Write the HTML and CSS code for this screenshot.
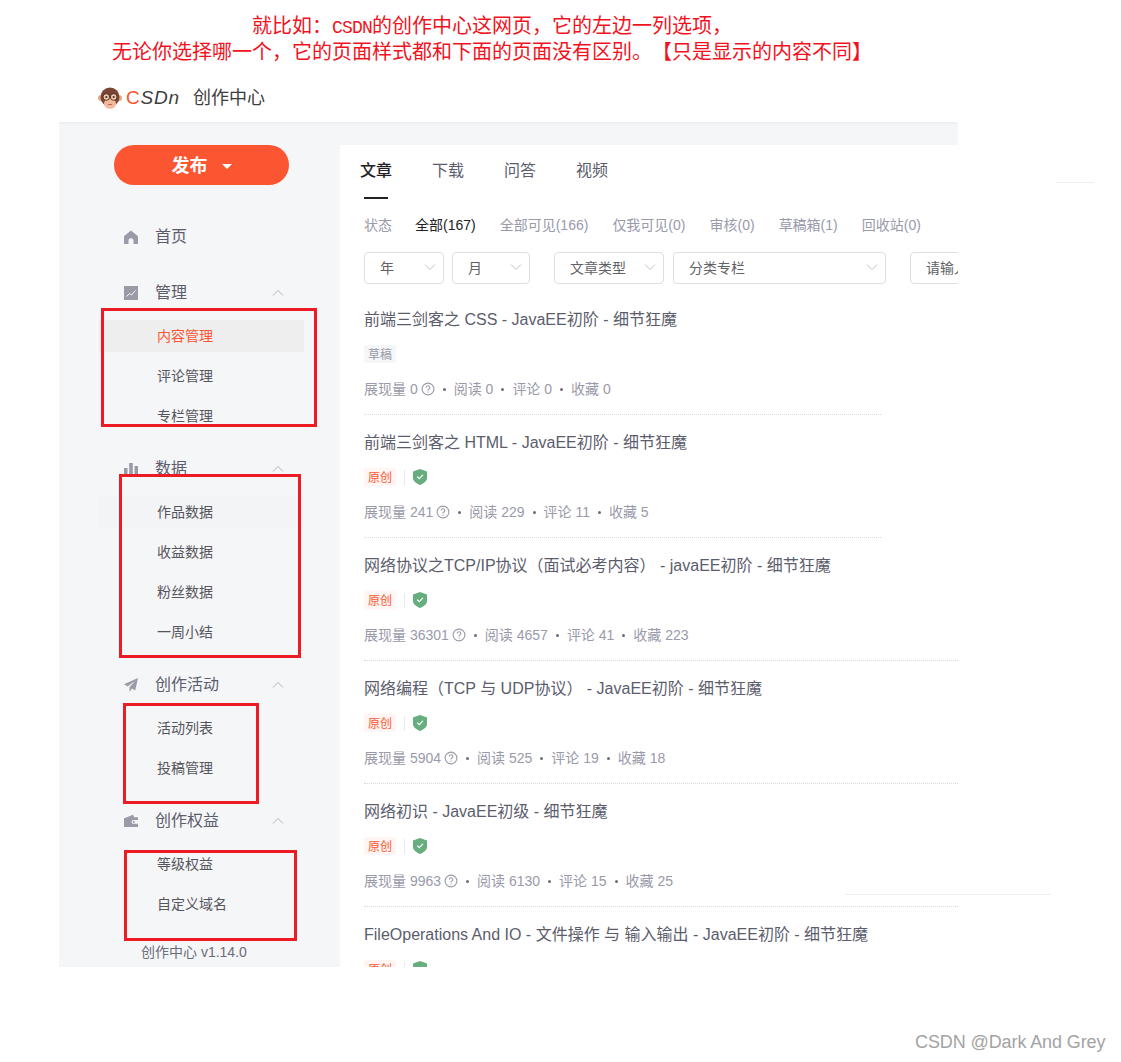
FILE: index.html
```html
<!DOCTYPE html>
<html lang="zh-CN">
<head>
<meta charset="utf-8">
<title>创作中心</title>
<link rel="stylesheet" href="styles.css">
</head>
<body>
<svg class="defs" width="0" height="0" aria-hidden="true">
  <symbol id="i-chev-up" viewBox="0 0 12 8"><path d="M1 6.5 6 1.5l5 5" fill="none" stroke="currentColor" stroke-width="1"/></symbol>
  <symbol id="i-chev-down" viewBox="0 0 12 8"><path d="M1 1.5 6 6.5l5-5" fill="none" stroke="currentColor" stroke-width="1"/></symbol>
  <symbol id="i-help" viewBox="0 0 14 14"><circle cx="7" cy="7" r="5.9" fill="none" stroke="currentColor" stroke-width="1.1"/><path d="M5.2 5.6A1.8 1.8 0 1 1 7.6 7.3c-.5.2-.6.5-.6 1.1" fill="none" stroke="currentColor" stroke-width="1.1"/><circle cx="7" cy="10.1" r=".7" fill="currentColor"/></symbol>
  <symbol id="i-shield" viewBox="0 0 14 16"><path d="M7 0 14 2.4V9c0 3.2-3.6 5.6-7 7-3.400-1.400-7-3.800-7-7V2.400Z" fill="#67ae7f"/><path d="M4.200 7.600 6.300 9.700 9.900 5.900" fill="none" stroke="#fff" stroke-width="1.200"/></symbol>
</svg>

<div class="annotation">
  <div>就比如：<span class="mono">CSDN</span>的创作中心这网页，它的左边一列选项，</div>
  <div>无论你选择哪一个，它的页面样式都和下面的页面没有区别。【只是显示的内容不同】</div>
</div>

<div class="shot">
  <header class="topbar">
    <svg class="monkey" viewBox="0 0 24 22" aria-hidden="true">
      <circle cx="3" cy="11" r="3" fill="#e8a782"/>
      <circle cx="21" cy="11" r="3" fill="#e8a782"/>
      <circle cx="12" cy="10" r="9.500" fill="#7a4534"/>
      <ellipse cx="12" cy="16.500" rx="6" ry="5.300" fill="#f2b99a"/>
      <circle cx="8.300" cy="10" r="3.300" fill="#f2c9ae" stroke="#4a2a20" stroke-width=".9"/>
      <circle cx="15.700" cy="10" r="3.300" fill="#f2c9ae" stroke="#4a2a20" stroke-width=".9"/>
      <circle cx="8.300" cy="10" r="1.100" fill="#4a2a20"/>
      <circle cx="15.700" cy="10" r="1.100" fill="#4a2a20"/>
      <path d="M10 17.500h4" stroke="#a8664c" stroke-width=".9"/>
    </svg>
    <span class="logo-text"><span class="logo-c">C</span>SDn</span>
    <span class="topbar-title">创作中心</span>
  </header>

  <div class="workspace">
    <aside class="sidebar">
      <button class="publish">发布<span class="caret"></span></button>
      <nav class="menu">
        <div class="head head-home">
          <svg class="head-icon" viewBox="0 0 14 14"><path d="M7 .5 14 6.300V14H9.500V10.800a2.500 2.500 0 0 0-5 0V14H0V6.300Z" fill="#9a9ba6"/></svg>
          <span>首页</span>
        </div>

        <section class="group">
          <div class="head">
            <svg class="head-icon" viewBox="0 0 14 14"><rect width="14" height="14" fill="#9a9ba6"/><path d="M2.500 10.500 5.500 7.500 7.500 9 11.500 4.500" fill="none" stroke="#f5f6f8" stroke-width="1"/></svg>
            <span>管理</span>
            <svg class="chev"><use href="#i-chev-up"/></svg>
          </div>
          <a class="sub sub-active">内容管理</a>
          <a class="sub">评论管理</a>
          <a class="sub">专栏管理</a>
        </section>

        <section class="group">
          <div class="head">
            <svg class="head-icon" viewBox="0 0 14 14"><path d="M0 6h3.500v8H0ZM5.200 1h3.600v13H5.200ZM10.500 4H14v10h-3.500Z" fill="#9a9ba6"/></svg>
            <span>数据</span>
            <svg class="chev"><use href="#i-chev-up"/></svg>
          </div>
          <a class="sub sub-hover">作品数据</a>
          <a class="sub">收益数据</a>
          <a class="sub">粉丝数据</a>
          <a class="sub">一周小结</a>
        </section>

        <section class="group">
          <div class="head">
            <svg class="head-icon" viewBox="0 0 14 14"><path d="M14 0 0 6.200l3.600 2.200L11 3 5.500 9.200V14L8 10.500l3.200 2Z" fill="#9a9ba6"/></svg>
            <span>创作活动</span>
            <svg class="chev"><use href="#i-chev-up"/></svg>
          </div>
          <a class="sub">活动列表</a>
          <a class="sub">投稿管理</a>
        </section>

        <section class="group">
          <div class="head">
            <svg class="head-icon" viewBox="0 0 14 14"><path d="M1 4 9 .8l1.200 2.500H14v2.700H9.500a1.900 1.900 0 0 0 0 3.800H14V13H0V4Z" fill="#9a9ba6"/><circle cx="9.800" cy="7.900" r="1" fill="#9a9ba6"/></svg>
            <span>创作权益</span>
            <svg class="chev"><use href="#i-chev-up"/></svg>
          </div>
          <a class="sub">等级权益</a>
          <a class="sub">自定义域名</a>
        </section>
      </nav>
      <div class="version">创作中心 v1.14.0</div>
    </aside>

    <main class="content">
      <div class="tabs">
        <span class="tab tab-active">文章</span>
        <span class="tab">下载</span>
        <span class="tab">问答</span>
        <span class="tab">视频</span>
      </div>

      <div class="status">
        <span class="status-label">状态</span>
        <span class="status-active">全部(167)</span>
        <span>全部可见(166)</span>
        <span>仅我可见(0)</span>
        <span>审核(0)</span>
        <span>草稿箱(1)</span>
        <span>回收站(0)</span>
      </div>

      <div class="filters">
        <div class="select s-year">年<svg class="select-chev"><use href="#i-chev-down"/></svg></div>
        <div class="select s-month">月<svg class="select-chev"><use href="#i-chev-down"/></svg></div>
        <div class="select s-type">文章类型<svg class="select-chev"><use href="#i-chev-down"/></svg></div>
        <div class="select s-cat">分类专栏<svg class="select-chev"><use href="#i-chev-down"/></svg></div>
        <div class="select s-search">请输入关键词</div>
      </div>

      <article class="post post-short">
        <h3 class="post-title">前端三剑客之 CSS - JavaEE初阶 - 细节狂魔</h3>
        <div class="post-tags"><span class="tag tag-draft">草稿</span></div>
        <div class="post-stats"><span>展现量 0</span><svg class="help"><use href="#i-help"/></svg><i class="dot"></i><span>阅读 0</span><i class="dot"></i><span>评论 0</span><i class="dot"></i><span>收藏 0</span></div>
      </article>

      <article class="post post-short">
        <h3 class="post-title">前端三剑客之 HTML - JavaEE初阶 - 细节狂魔</h3>
        <div class="post-tags"><span class="tag tag-orig">原创</span><i class="tag-sep"></i><svg class="shield"><use href="#i-shield"/></svg></div>
        <div class="post-stats"><span>展现量 241</span><svg class="help"><use href="#i-help"/></svg><i class="dot"></i><span>阅读 229</span><i class="dot"></i><span>评论 11</span><i class="dot"></i><span>收藏 5</span></div>
      </article>

      <article class="post">
        <h3 class="post-title">网络协议之TCP/IP协议（面试必考内容） - javaEE初阶 - 细节狂魔</h3>
        <div class="post-tags"><span class="tag tag-orig">原创</span><i class="tag-sep"></i><svg class="shield"><use href="#i-shield"/></svg></div>
        <div class="post-stats"><span>展现量 36301</span><svg class="help"><use href="#i-help"/></svg><i class="dot"></i><span>阅读 4657</span><i class="dot"></i><span>评论 41</span><i class="dot"></i><span>收藏 223</span></div>
      </article>

      <article class="post">
        <h3 class="post-title">网络编程（TCP 与 UDP协议） - JavaEE初阶 - 细节狂魔</h3>
        <div class="post-tags"><span class="tag tag-orig">原创</span><i class="tag-sep"></i><svg class="shield"><use href="#i-shield"/></svg></div>
        <div class="post-stats"><span>展现量 5904</span><svg class="help"><use href="#i-help"/></svg><i class="dot"></i><span>阅读 525</span><i class="dot"></i><span>评论 19</span><i class="dot"></i><span>收藏 18</span></div>
      </article>

      <article class="post">
        <h3 class="post-title">网络初识 - JavaEE初级 - 细节狂魔</h3>
        <div class="post-tags"><span class="tag tag-orig">原创</span><i class="tag-sep"></i><svg class="shield"><use href="#i-shield"/></svg></div>
        <div class="post-stats"><span>展现量 9963</span><svg class="help"><use href="#i-help"/></svg><i class="dot"></i><span>阅读 6130</span><i class="dot"></i><span>评论 15</span><i class="dot"></i><span>收藏 25</span></div>
      </article>

      <article class="post">
        <h3 class="post-title">FileOperations And IO - 文件操作 与 输入输出 - JavaEE初阶 - 细节狂魔</h3>
        <div class="post-tags"><span class="tag tag-orig">原创</span><i class="tag-sep"></i><svg class="shield"><use href="#i-shield"/></svg></div>
      </article>
    </main>
  </div>
</div>

<div class="redbox box-a"></div>
<div class="redbox box-b"></div>
<div class="redbox box-c"></div>
<div class="redbox box-d"></div>
<div class="stray stray-top"></div>
<div class="stray stray-bottom"></div>
<div class="watermark">CSDN @Dark And Grey</div>
</body>
</html>
```

FILE: styles.css
```css
* { box-sizing: border-box; }
html, body { margin: 0; padding: 0; background: #fff; }
body {
  position: relative;
  width: 1121px;
  height: 1062px;
  overflow: hidden;
  font-family: "Liberation Sans", "Noto Sans CJK SC", sans-serif;
  color: #555666;
  text-spacing-trim: space-all;
}
.defs { position: absolute; }

.annotation {
  width: 984px;
  height: 75px;
  padding-top: 15px;
  text-align: center;
  font-family: "Liberation Mono", "Noto Sans CJK SC", monospace;
  font-size: 20px;
  line-height: 25px;
  color: #f2121e;
}
.mono { font-size: 18px; letter-spacing: -.8px; }

.shot { width: 899px; margin-left: 59px; }

.topbar {
  display: flex;
  align-items: center;
  height: 47px;
  padding-left: 39px;
  padding-bottom: 2px;
  position: relative;
  z-index: 1;
  box-shadow: 0 1px 3px rgba(0, 0, 0, .06);
  clip-path: inset(0 0 -6px 0);
  background: #fff;
}
.monkey { width: 24px; height: 22px; flex: none; }
.logo-text {
  margin-left: 4px;
  width: 52px;
  font-size: 19px;
  line-height: 22px;
  font-style: italic;
  letter-spacing: .8px;
  color: #404040;
  white-space: nowrap;
}
.logo-c { color: #fc5531; font-style: normal; }
.topbar-title { margin-left: 15px; font-size: 18px; line-height: 24px; color: #3d3d3d; }

.workspace {
  display: flex;
  height: 845px;
  background: #f5f6f8;
  overflow: hidden;
}
.sidebar { width: 281px; flex: none; padding-top: 23px; }
.publish {
  display: flex;
  align-items: center;
  justify-content: center;
  width: 175px;
  height: 40px;
  margin-left: 55px;
  padding: 2px 0 0;
  border: 0;
  border-radius: 20px;
  background: #fc5531;
  color: #fff;
  font: bold 18px/24px "Liberation Sans", "Noto Sans CJK SC", sans-serif;
}
.caret {
  margin-left: 14px;
  border-top: 5px solid #fff;
  border-left: 5px solid transparent;
  border-right: 5px solid transparent;
}

.menu { margin-top: 31px; }
.head {
  display: flex;
  align-items: center;
  height: 40px;
  padding-top: 2px;
  padding-left: 65px;
  font-size: 16px;
  color: #5c5d6c;
}
.head-home { margin-bottom: 16px; }
.head-icon { width: 14px; height: 14px; margin-right: 17px; flex: none; }
.chev { width: 12px; height: 8px; margin-left: auto; margin-right: 56px; color: #b6b7c0; }
.head span { line-height: 24px; }

.group { display: flex; flex-direction: column; margin-bottom: 12px; }
.group .head { margin-bottom: 4px; }
.sub {
  display: block;
  flex: none;
  width: 205px;
  height: 32px;
  margin: 4px 0 4px 40px;
  padding-left: 58px;
  font-size: 14px;
  line-height: 32px;
  color: #55555c;
}
.sub-active { background: #eeeeee; color: #fc5531; }
.sub-hover { background: #f3f4f6; }
.version { margin-left: 82px; margin-top: 18px; font-size: 14px; line-height: 20px; color: #6b6c7a; }

.content {
  flex: 1;
  min-width: 0;
  margin-top: 23px;
  padding-left: 24px;
  background: #fff;
  overflow: hidden;
}
.tabs { display: flex; gap: 40px; height: 54px; margin-left: -4px; padding-top: 14px; }
.tab { position: relative; height: 40px; font-size: 16px; line-height: 24px; color: #5c5d6c; }
.tab-active { font-weight: 500; color: #222226; }
.tab-active::after {
  content: "";
  position: absolute;
  left: 4px;
  right: 4px;
  bottom: 0;
  height: 2px;
  background: #222226;
}
.status {
  display: flex;
  gap: 24px;
  margin-top: 16px;
  font-size: 14px;
  line-height: 20px;
  color: #999aaa;
  white-space: nowrap;
}
.status-label { margin-right: -1px; }
.status-active { color: #222226; }

.filters { display: flex; margin-top: 17px; height: 32px; white-space: nowrap; }
.select {
  display: flex;
  align-items: center;
  flex: none;
  height: 32px;
  padding-left: 15px;
  padding-bottom: 2px;
  border: 1px solid #dcdfe6;
  border-radius: 4px;
  font-size: 14px;
  color: #606266;
  background: #fff;
}
.select-chev { width: 12px; height: 8px; margin-left: auto; margin-right: 7px; color: #c0c4cc; }
.s-year { width: 80px; margin-right: 8px; }
.s-month { width: 78px; margin-right: 24px; }
.s-type { width: 110px; margin-right: 9px; }
.s-cat { width: 213px; margin-right: 24px; }
.s-search { width: 200px; }

.post { width: 620px; height: 123px; padding-top: 18px; border-bottom: 1px dotted #d8d8de; }
.filters + .post { margin-top: 8px; }
.post-short { width: 517px; }
.post-title {
  margin: 0;
  font-size: 16px;
  font-weight: normal;
  line-height: 20px;
  color: #5c5d6c;
  white-space: nowrap;
}
.post-tags { display: flex; align-items: center; height: 18px; margin-top: 15px; }
.tag { width: 32px; height: 18px; border-radius: 2px; font-size: 12px; line-height: 20px; text-align: center; }
.tag-draft { background: #f5f6f7; color: #999aaa; }
.tag-orig { background: #fff5f2; color: #fc5531; }
.tag-sep { width: 1px; height: 15px; margin: 0 8px; background: #e8e8ed; }
.shield { width: 14px; height: 16px; }
.post-stats {
  display: flex;
  align-items: center;
  height: 20px;
  margin-top: 16px;
  font-size: 14px;
  line-height: 20px;
  color: #999aaa;
  white-space: nowrap;
}
.help { width: 14px; height: 14px; margin-left: 3px; color: #999aaa; }
.dot { width: 3px; height: 3px; margin: 0 8px; border-radius: 50%; background: #6b6c7a; }

.redbox { position: absolute; border: 3px solid #ed1c24; }
.box-a { left: 101px; top: 308px; width: 216px; height: 119px; }
.box-b { left: 119px; top: 474px; width: 182px; height: 184px; }
.box-c { left: 123px; top: 703px; width: 136px; height: 101px; }
.box-d { left: 124px; top: 850px; width: 173px; height: 91px; }

.stray { position: absolute; height: 1px; background: #eeeeee; }
.stray-top { left: 1056px; top: 182px; width: 38px; }
.stray-bottom { left: 845px; top: 894px; width: 206px; }

.watermark {
  position: absolute;
  left: 915px;
  top: 1031px;
  font-size: 18px;
  line-height: 22px;
  letter-spacing: -.1px;
  color: #a3a3a3;
  white-space: nowrap;
}
```
